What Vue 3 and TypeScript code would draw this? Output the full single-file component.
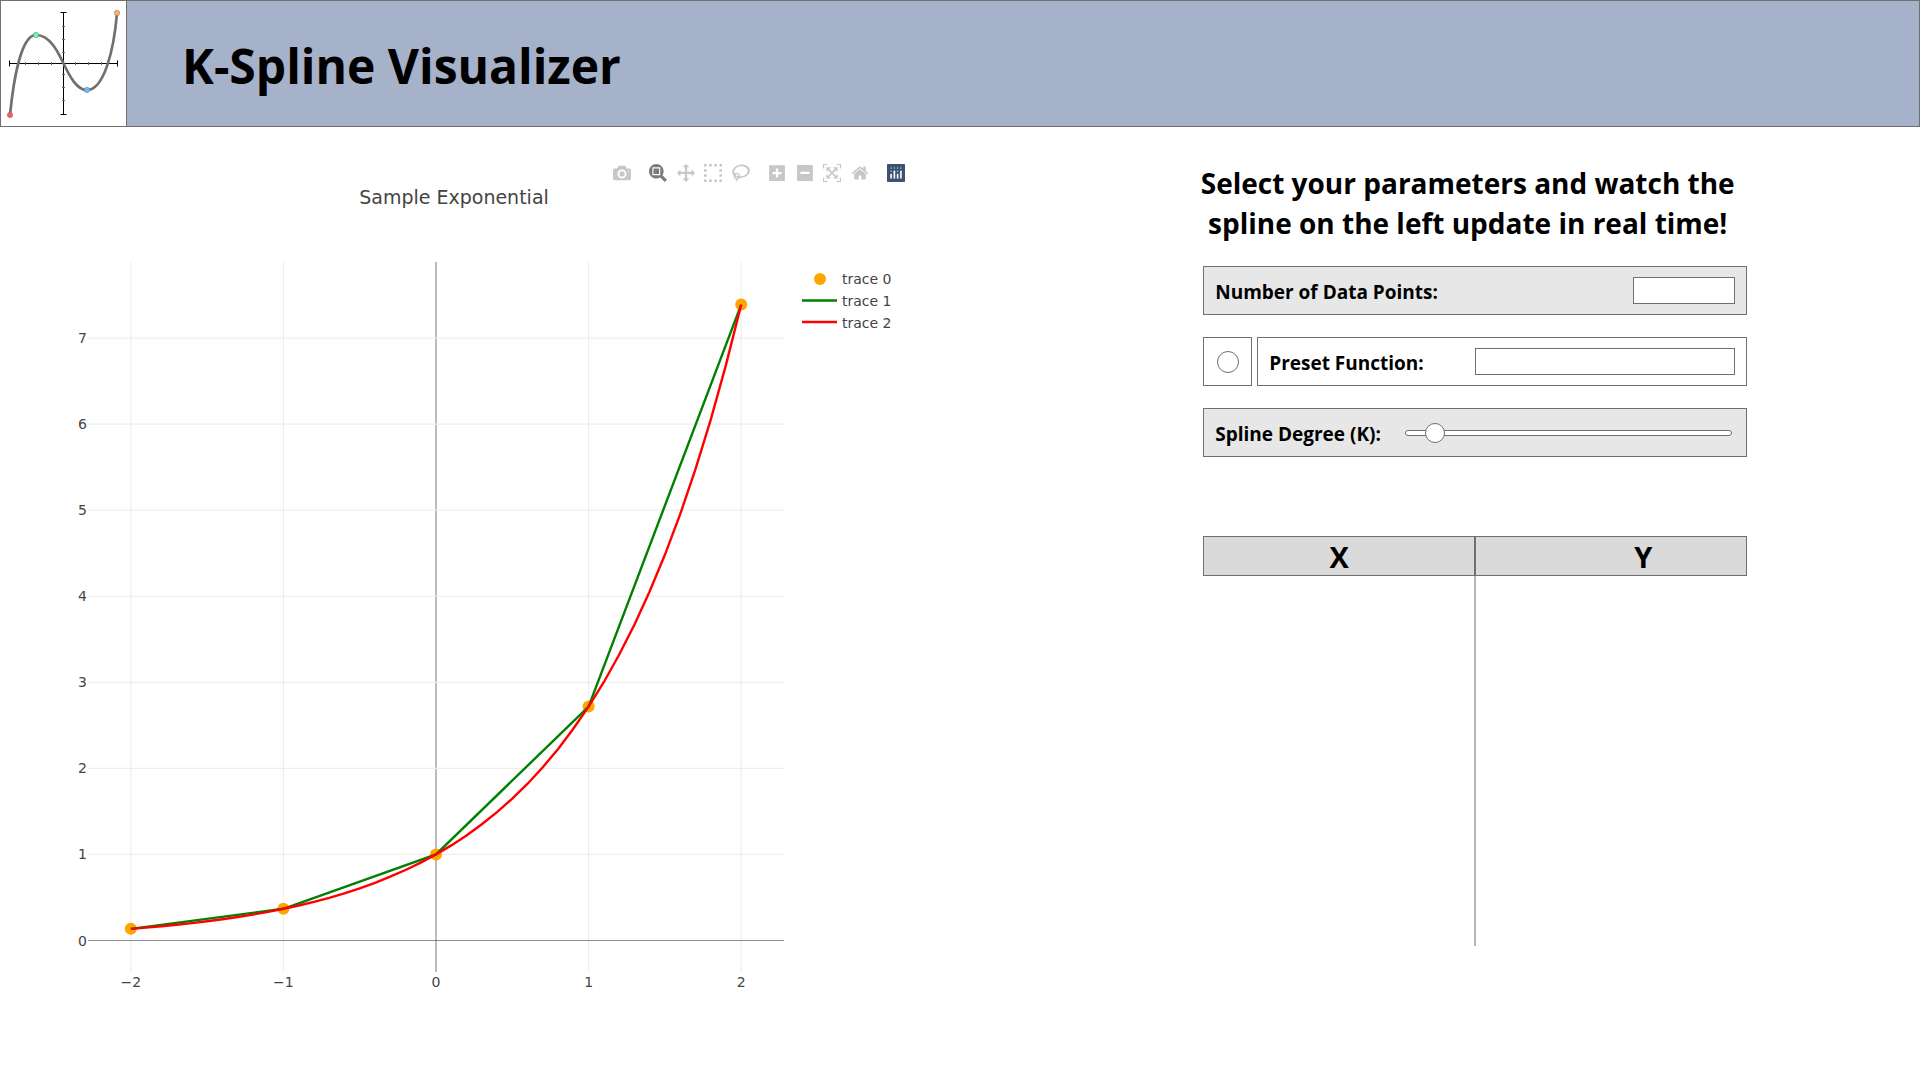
<script setup lang="ts">
import { ref } from 'vue'

interface Tool {
  name: string
  box: string
  path: string
  gap?: boolean
  active?: boolean
}

const points = ref('')
const preset = ref('')
const degree = ref(2)

const tools: Tool[] = [
  {
    name: 'Download plot as a png',
    box: '0 0 1000 1000',
    path: 'm500 450c-83 0-150-67-150-150 0-83 67-150 150-150 83 0 150 67 150 150 0 83-67 150-150 150z m400 150h-120c-16 0-34 13-39 29l-31 93c-6 15-23 28-40 28h-340c-16 0-34-13-39-28l-31-94c-6-15-23-28-40-28h-120c-55 0-100-45-100-100v-450c0-55 45-100 100-100h800c55 0 100 45 100 100v450c0 55-45 100-100 100z m-400-550c-138 0-250 112-250 250 0 138 112 250 250 250 138 0 250-112 250-250 0-138-112-250-250-250z m365 380c-19 0-35 16-35 35 0 19 16 35 35 35 19 0 35-16 35-35 0-19-16-35-35-35z'
  },
  {
    name: 'Zoom',
    box: '0 0 1000 1000',
    gap: true,
    active: true,
    path: 'm1000-25l-250 251c40 63 63 138 63 218 0 224-182 406-407 406-224 0-406-182-406-406s183-406 407-406c80 0 155 22 218 62l250-250 125 125z m-812 250l0 438 437 0 0-438-437 0z m62 375l313 0 0-312-313 0 0 312z'
  },
  {
    name: 'Pan',
    box: '0 0 1000 1000',
    path: 'm1000 350l-187 188 0-125-250 0 0 250 125 0-188 187-187-187 125 0 0-250-250 0 0 125-188-188 186-187 0 125 252 0 0-250-125 0 187-188 188 188-125 0 0 250 250 0 0-126 187 188z'
  },
  {
    name: 'Box Select',
    box: '0 0 1000 1000',
    path: 'm0 850l0-143 143 0 0 143-143 0z m286 0l0-143 143 0 0 143-143 0z m285 0l0-143 143 0 0 143-143 0z m286 0l0-143 143 0 0 143-143 0z m-857-286l0-143 143 0 0 143-143 0z m857 0l0-143 143 0 0 143-143 0z m-857-285l0-143 143 0 0 143-143 0z m857 0l0-143 143 0 0 143-143 0z m-857-286l0-143 143 0 0 143-143 0z m286 0l0-143 143 0 0 143-143 0z m285 0l0-143 143 0 0 143-143 0z m286 0l0-143 143 0 0 143-143 0z'
  },
  {
    name: 'Lasso Select',
    box: '0 0 1031 1000',
    path: 'm1018 538c-36 207-290 336-568 286-277-48-473-256-436-463 10-57 36-108 76-151-13-66 11-137 68-183 34-28 75-41 114-42l-55-70 0 0c-2-1-3-2-4-3-10-14-8-34 5-45 14-11 34-8 45 4 1 1 2 3 2 5l0 0 113 140c16 11 31 24 45 40 4 3 6 7 8 11 48-3 100 0 151 9 278 48 473 255 436 462z m-624-379c-80 14-149 48-197 96 42 42 109 47 156 9 33-26 47-66 41-105z m-187-74c-19 16-33 37-39 60 50-32 109-55 174-68-42-25-95-24-135 8z m360 75c-34-7-69-9-102-8 8 62-16 128-68 170-73 59-175 54-244-5-9 20-16 40-20 61-28 159 121 317 333 354s407-60 434-217c28-159-121-318-333-355z'
  },
  {
    name: 'Zoom in',
    box: '-62 0 1000 1000',
    gap: true,
    path: 'm1 787l0-875 875 0 0 875-875 0z m687-500l-187 0 0-187-125 0 0 187-188 0 0 125 188 0 0 187 125 0 0-187 187 0 0-125z'
  },
  {
    name: 'Zoom out',
    box: '-62 0 1000 1000',
    path: 'm0 788l0-876 875 0 0 876-875 0z m688-500l-500 0 0 125 500 0 0-125z'
  },
  {
    name: 'Autoscale',
    box: '0 0 1000 1000',
    path: 'm250 850l-187 0-63 0 0-62 0-188 63 0 0 188 187 0 0 62z m688 0l-188 0 0-62 188 0 0-188 62 0 0 188 0 62-62 0z m-875-938l0 188-63 0 0-188 0-62 63 0 187 0 0 62-187 0z m875 188l0-188-188 0 0-62 188 0 62 0 0 62 0 188-62 0z m-125 188l-1 0-93-94-156 156 156 156 92-93 2 0 0 250-250 0 0-2 93-92-156-156-156 156 94 92 0 2-250 0 0-250 0 0 93 93 157-156-157-156-93 94 0 0 0-250 250 0 0 0-94 93 156 157 156-157-93-93 0 0 250 0 0 250z'
  },
  {
    name: 'Reset axes',
    box: '-36 0 1000 1000',
    path: 'm786 296v-267q0-15-11-26t-25-10h-214v214h-143v-214h-214q-15 0-25 10t-11 26v267q0 1 0 2t0 2l321 264 321-264q1-1 1-4z m124 39l-34-41q-5-5-12-6h-2q-7 0-12 3l-386 322-386-322q-7-4-13-4-7 2-12 7l-35 41q-4 5-3 13t6 12l401 334q18 15 42 15t43-15l136-114v109q0 8 5 13t13 5h107q8 0 13-5t5-13v-227l122-102q5-5 6-12t-4-13z'
  }
]

/* Plot area inside the 910 x 830 chart canvas */
const area = { left: 88, right: 784, top: 80, bottom: 790 }
const origin = { x: 436, y: 758.5 }
const unit = { x: 152.6, y: 86.06 }

const sx = (v: number): number => origin.x + v * unit.x
const sy = (v: number): number => origin.y - v * unit.y

const xTicks = [-2, -1, 0, 1, 2]
const yTicks = [0, 1, 2, 3, 4, 5, 6, 7]
const label = (v: number): string => String(v).replace('-', '\u2212')

const toLine = (xs: number[]): string =>
  xs.map((x) => `${sx(x).toFixed(1)},${sy(Math.exp(x)).toFixed(1)}`).join(' ')

const splineLine = toLine(xTicks)
const curveLine = toLine(Array.from({ length: 41 }, (_, i) => -2 + i * 0.1))
</script>

<template>
  <div class="page">
    <header class="banner">
      <svg class="logo" viewBox="0 0 125 125" aria-label="K-Spline logo">
        <g stroke="#000" fill="none">
          <path d="M8.500 62.500H116.500M62.500 11.500V113.500" />
          <path d="M8.500 59.500v6M116.500 59.500v6M59.500 11.500h6M59.500 113.500h6" />
          <path
            stroke="#666"
            d="M24.500 61v3M37.500 61v3M50.500 61v3M74.500 61v3M87.500 61v3M100.500 61v3M61 25.500h3M61 38.500h3M61 51.500h3M61 73.500h3M61 86.500h3M61 99.500h3"
          />
        </g>
        <path
          d="M9 114C13 74 21 34 35 34C49 34 57 51 62.500 62.500C69 76 76 89 86 89C103 89 113 49 116 12"
          fill="none"
          stroke="#707070"
          stroke-width="2.700"
        />
        <g stroke="#777" stroke-width=".5">
          <circle cx="9" cy="114" r="2.700" fill="#ff5a5a" />
          <circle cx="35" cy="34" r="2.700" fill="#5effb0" />
          <circle cx="86" cy="89" r="2.700" fill="#5ec4ff" />
          <circle cx="116" cy="12" r="2.700" fill="#ffb05e" />
        </g>
      </svg>
      <h1>K-Spline Visualizer</h1>
    </header>

    <main>
      <section class="chart">
        <div class="modebar">
          <button
            v-for="tool in tools"
            :key="tool.name"
            type="button"
            :aria-label="tool.name"
            :class="{ gap: tool.gap, active: tool.active }"
          >
            <svg :viewBox="tool.box">
              <path :d="tool.path" transform="matrix(1 0 0 -1 0 850)" />
            </svg>
          </button>
          <a class="gap" href="#" aria-label="Produced with Plotly">
            <svg viewBox="0 0 132 132">
              <rect width="132" height="132" rx="6" fill="#3f4f75" />
              <g fill="#80cfbe">
                <circle cx="30" cy="30" r="6" />
                <circle cx="54" cy="30" r="6" />
                <circle cx="78" cy="30" r="6" />
                <circle cx="102" cy="30" r="6" />
                <circle cx="30" cy="54" r="6" />
                <circle cx="78" cy="54" r="6" />
              </g>
              <g fill="#fff">
                <rect x="24" y="72" width="12" height="36" rx="6" />
                <rect x="48" y="48" width="12" height="60" rx="6" />
                <rect x="72" y="72" width="12" height="36" rx="6" />
                <rect x="96" y="48" width="12" height="60" rx="6" />
              </g>
            </svg>
          </a>
        </div>

        <svg class="plot" viewBox="0 0 910 830">
          <text class="title" x="454" y="22" text-anchor="middle">Sample Exponential</text>

          <g class="grid">
            <line
              v-for="v in xTicks"
              :key="'x' + v"
              :class="{ zero: v === 0 }"
              :x1="sx(v)"
              :x2="sx(v)"
              :y1="area.top"
              :y2="area.bottom"
            />
            <line
              v-for="v in yTicks"
              :key="'y' + v"
              :class="{ zero: v === 0 }"
              :x1="area.left"
              :x2="area.right"
              :y1="sy(v)"
              :y2="sy(v)"
            />
          </g>

          <circle v-for="v in xTicks" :key="v" :cx="sx(v)" :cy="sy(Math.exp(v))" r="6" fill="orange" />
          <polyline class="trace" :points="splineLine" stroke="green" />
          <polyline class="trace" :points="curveLine" stroke="red" />

          <text v-for="v in xTicks" :key="'tx' + v" :x="sx(v)" y="805" text-anchor="middle">{{ label(v) }}</text>
          <text v-for="v in yTicks" :key="'ty' + v" x="87" :y="sy(v) + 5" text-anchor="end">{{ v }}</text>

          <circle cx="820" cy="97" r="6" fill="orange" />
          <line class="trace" x1="802" x2="837" y1="118.500" y2="118.500" stroke="green" />
          <line class="trace" x1="802" x2="837" y1="140" y2="140" stroke="red" />
          <text x="842" y="102">trace 0</text>
          <text x="842" y="124">trace 1</text>
          <text x="842" y="146">trace 2</text>
        </svg>
      </section>

      <section class="panel">
        <h2>Select your parameters and watch the spline on the left update in real time!</h2>

        <div class="field shaded">
          <label for="points">Number of Data Points:</label>
          <input id="points" v-model="points" class="short" type="text" />
        </div>

        <div class="pair">
          <div class="field pick">
            <input type="radio" name="source" aria-label="Use a preset function" />
          </div>
          <div class="field grow">
            <label for="preset">Preset Function:</label>
            <input id="preset" v-model="preset" class="long" type="text" />
          </div>
        </div>

        <div class="field shaded">
          <label for="degree">Spline Degree (K):</label>
          <input id="degree" v-model="degree" type="range" min="1" max="17" />
        </div>

        <table>
          <thead>
            <tr>
              <th scope="col">X</th>
              <th scope="col">Y</th>
            </tr>
          </thead>
          <tbody>
            <tr>
              <td></td>
              <td></td>
            </tr>
          </tbody>
        </table>
      </section>
    </main>
  </div>
</template>

<style>
body {
  margin: 0;
  background: #fff;
}
</style>

<style scoped>
.page {
  font-family: 'Open Sans', 'Noto Sans', sans-serif;
  color: #000;
}

.page * {
  box-sizing: border-box;
}

.banner {
  display: flex;
  align-items: center;
  height: 127px;
  border: 1px solid #707070;
  background: #a6b1ca;
}

.logo {
  flex: none;
  width: 126px;
  height: 125px;
  border-right: 1px solid #707070;
  background: #fff;
}

h1 {
  margin: 0 0 0 55px;
  padding-top: 4px;
  font-size: 48px;
  line-height: 64px;
  font-weight: 700;
}

main {
  display: flex;
  justify-content: space-between;
  padding: 36px 9vw 40px 0;
}

.chart {
  flex: 0 1 910px;
  min-width: 0;
}

.modebar {
  display: flex;
  width: 302px;
  height: 19px;
  margin-left: auto;
}

.modebar button,
.modebar a {
  flex: 1;
  display: flex;
  justify-content: center;
  align-items: center;
  padding: 0;
  border: 0;
  background: none;
}

.modebar .gap {
  margin-left: 9px;
}

.modebar svg {
  width: 18px;
  height: 18px;
  fill: #c7c7c7;
}

.modebar .active svg {
  fill: #7b7b7b;
}

.plot {
  display: block;
  width: 100%;
  font-family: Verdana, 'DejaVu Sans', sans-serif;
  font-size: 14px;
  fill: #444;
}

.title {
  font-size: 19px;
}

.grid line {
  stroke: #eee;
  stroke-width: 1.2;
}

.grid .zero {
  stroke: #444;
  stroke-opacity: 0.6;
}

.trace {
  fill: none;
  stroke-width: 2.4;
}

.panel {
  flex: 0 1 544px;
}

h2 {
  margin: 0 5px 23px -10px;
  font-size: 28px;
  line-height: 40px;
  font-weight: 700;
  text-align: center;
}

.field {
  display: flex;
  justify-content: space-between;
  align-items: center;
  height: 49px;
  margin-bottom: 22px;
  padding: 0 11px;
  border: 1px solid #707070;
}

.shaded {
  background: #e7e7e7;
}

.pair {
  display: flex;
  gap: 5px;
}

.pick {
  width: 49px;
  justify-content: center;
  padding: 0;
}

.grow {
  flex: 1;
}

label {
  padding-top: 3px;
  font-size: 19px;
  line-height: 26px;
  font-weight: 700;
  white-space: nowrap;
}

input[type='text'] {
  height: 27px;
  padding: 0 6px;
  border: 1px solid #707070;
  border-radius: 0;
  background: #fff;
  font: inherit;
  font-size: 16px;
}

.short {
  width: 102px;
}

.long {
  width: 260px;
}

input[type='radio'] {
  appearance: none;
  width: 22px;
  height: 22px;
  margin: 0;
  border: 1px solid #707070;
  border-radius: 50%;
  background: #fff;
}

input[type='range'] {
  appearance: none;
  width: 327px;
  height: 20px;
  margin: 0 3px 0 0;
  background: none;
}

input[type='range']::-webkit-slider-runnable-track {
  height: 6px;
  border: 1px solid #707070;
  border-radius: 3px;
  background: #fff;
}

input[type='range']::-webkit-slider-thumb {
  appearance: none;
  width: 20px;
  height: 20px;
  margin-top: -8px;
  border: 1px solid #707070;
  border-radius: 50%;
  background: #fff;
}

table {
  width: 100%;
  margin-top: 79px;
  border-collapse: separate;
  border-spacing: 0;
  table-layout: fixed;
}

th {
  height: 40px;
  padding: 2px 0 0;
  border: 1px solid #707070;
  background: #dadada;
  font-size: 29px;
  line-height: 36px;
  font-weight: 700;
}

th + th {
  padding-left: 64px;
}

td {
  height: 370px;
  padding: 0;
  border-right: 1px solid #b7b7b7;
}

td + td {
  border-right: 0;
  border-left: 1px solid #b7b7b7;
}
</style>
